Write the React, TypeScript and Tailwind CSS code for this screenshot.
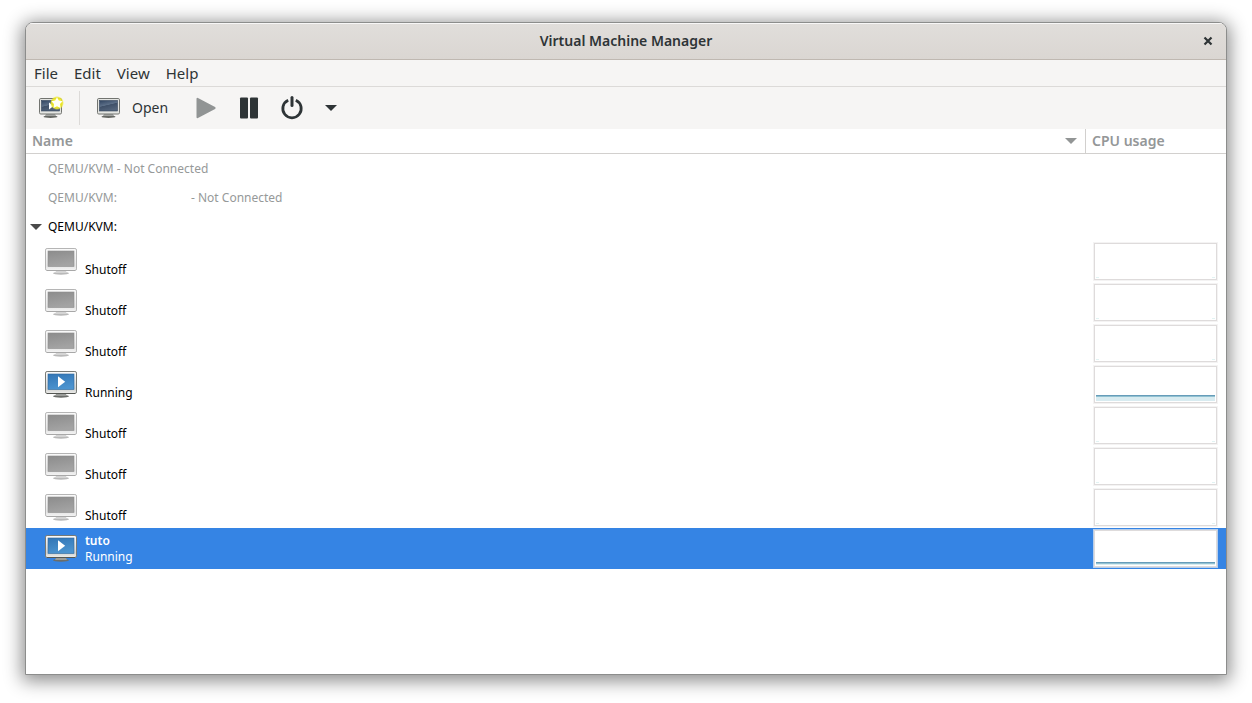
import { useState } from "react";

type Machine = { id: number; name: string; state: "Shutoff" | "Running"; load: number };

const machines: Machine[] = [
  { id: 1, name: "", state: "Shutoff", load: 0 },
  { id: 2, name: "", state: "Shutoff", load: 0 },
  { id: 3, name: "", state: "Shutoff", load: 0 },
  { id: 4, name: "", state: "Running", load: 5 },
  { id: 5, name: "", state: "Shutoff", load: 0 },
  { id: 6, name: "", state: "Shutoff", load: 0 },
  { id: 7, name: "", state: "Shutoff", load: 0 },
  { id: 8, name: "tuto", state: "Running", load: 2 },
];

function StateIcon({ running }: { running: boolean }) {
  const id = running ? "run" : "off";
  return (
    <svg width="32" height="28" viewBox="0 0 32 28" aria-hidden="true" className="block shrink-0">
      <defs>
        <linearGradient id={`${id}-case`} x1="0" y1="0" x2="0" y2="1">
          <stop offset="0" stopColor={running ? "#fbfbfb" : "#fafafa"} />
          <stop offset="0.8" stopColor={running ? "#d2d3d1" : "#e6e6e6"} />
          <stop offset="1" stopColor={running ? "#eeeeec" : "#f4f4f4"} />
        </linearGradient>
        <linearGradient id={`${id}-screen`} x1="0" y1="0" x2="0.3" y2="1">
          <stop offset="0" stopColor={running ? "#3275b5" : "#8c8c8c"} />
          <stop offset="1" stopColor={running ? "#4b93cf" : "#a3a3a3"} />
        </linearGradient>
      </defs>
      <ellipse cx="16" cy="25.3" rx="8" ry="1.5" fill={running ? "#6b6d6a" : "#b9b9b9"} />
      <path d="M11 23h10l1 2H10z" fill={running ? "#9a9c99" : "#d4d4d4"} />
      <rect x="0.5" y="0.5" width="31" height="22" rx="1.6" fill={`url(#${id}-case)`} stroke={running ? "#777975" : "#b5b5b5"} />
      <rect x="3" y="3" width="26" height="15.5" fill={`url(#${id}-screen)`} stroke={running ? "#30699f" : "#8e8e8e"} strokeWidth="0.6" />
      {running && <path d="M13 5.2v11l7.2-5.5z" fill="#fff" />}
      <path d="M2 22.5h28" stroke={running ? "#555753" : "#a8a8a8"} />
    </svg>
  );
}

function ToolbarMonitor({ fresh = false }: { fresh?: boolean }) {
  const id = fresh ? "new" : "open";
  return (
    <svg width="26" height="24" viewBox="0 0 26 24" aria-hidden="true" className="block">
      <defs>
        <linearGradient id={`${id}-tb`} x1="0" y1="0" x2="0.4" y2="1">
          <stop offset="0" stopColor="#2f4360" />
          <stop offset="0.5" stopColor="#5d7088" />
          <stop offset="0.55" stopColor="#3f5068" />
          <stop offset="1" stopColor="#52637a" />
        </linearGradient>
        <radialGradient id={`${id}-glow`}>
          <stop offset="0.5" stopColor="#f4ee20" />
          <stop offset="0.8" stopColor="#eee82c" stopOpacity="0.85" />
          <stop offset="1" stopColor="#eee82c" stopOpacity="0" />
        </radialGradient>
      </defs>
      <ellipse cx="12.5" cy="20.7" rx="7" ry="1.3" fill="#666864" />
      <path d="M8 18h9l1 2H7z" fill="#a3a5a2" />
      <rect x="1.5" y="2.5" width="22" height="15.5" rx="1.3" fill="#e4e5e2" stroke="#727470" />
      <rect x="3.5" y="4.5" width="18" height="10.5" fill={`url(#${id}-tb)`} stroke="#32435b" strokeWidth="0.6" />
      {fresh && (
        <>
          <path d="M11 6.5v7l4.5-3.5z" fill="#fff" />
          <circle cx="19" cy="7" r="7" fill={`url(#${id}-glow)`} />
          <path d="M19 1.2l1.8 3.4 3.8.7-2.6 2.8.5 3.9-3.5-1.7-3.5 1.7.5-3.9-2.6-2.8 3.8-.7z" fill="#fffff8" />
        </>
      )}
    </svg>
  );
}

function CpuGraph({ load }: { load: number }) {
  const y = 36 - load;
  return (
    <svg viewBox="0 0 125 39" className="block h-[39px] w-[125px]" shapeRendering="crispEdges" role="img" aria-label="CPU usage">
      <rect width="125" height="39" fill="#f0eeee" fillOpacity="0.7" />
      <rect x="1" y="1" width="123" height="37" fill="#dedbdb" />
      <rect x="2" y="2" width="121" height="35" fill="#fff" />
      {load > 0 ? (
        <>
          <rect x="3" y={y} width="119" height={load} fill="#d8ebf0" />
          <rect x="3" y={y} width="119" height="1" fill="#91c1d1" />
          <rect x="3" y={y - 1} width="119" height="1" fill="#669cb9" />
        </>
      ) : (
        <>
          <rect x="3" y="35" width="3" height="1" fill="#e2f3f3" />
          <rect x="119" y="35" width="3" height="1" fill="#e2f3f3" />
        </>
      )}
    </svg>
  );
}

export default function App() {
  const [selected, setSelected] = useState(8);
  return (
    <div className="flex min-h-screen bg-white px-[25px] pt-[22px] pb-7 font-['Noto_Sans','Open_Sans',sans-serif] text-[#2e3436]">
      <main className="flex min-w-0 flex-1 flex-col overflow-hidden rounded-t-lg border border-[#8c8d8c] bg-white shadow-[0_3px_18px_3px_rgba(0,0,0,0.45)]">
        <header className="flex h-[37px] items-center border-b border-[#bfb8b1] bg-linear-to-b from-[#e1dedb] to-[#dad6d2] px-2 shadow-[inset_0_1px_#f8f7f7]">
          <span className="w-5" />
          <h1 className="flex-1 text-center text-sm font-semibold">Virtual Machine Manager</h1>
          <button aria-label="Close" className="flex h-6 w-5 items-center justify-center">
            <svg width="10" height="10" viewBox="0 0 10 10" aria-hidden="true">
              <path d="M1.5 1.5l7 7M8.5 1.5l-7 7" stroke="#2e3436" strokeWidth="2.2" />
            </svg>
          </button>
        </header>
        <nav className="flex h-[27px] items-center gap-4 border-b border-[#dcdad8] bg-[#f6f5f4] px-2 pt-px text-[15px]">
          <button>File</button>
          <button>Edit</button>
          <button>View</button>
          <button>Help</button>
        </nav>
        <div role="toolbar" className="flex h-[42px] items-center bg-[#f6f5f4] text-sm">
          <button aria-label="New virtual machine" className="ml-3"><ToolbarMonitor fresh /></button>
          <span className="mr-4 ml-[15px] h-[34px] w-px bg-[#dcdad8]" />
          <button className="flex items-center gap-[10px]"><ToolbarMonitor />Open</button>
          <button aria-label="Run" className="ml-[27px]">
            <svg width="22" height="24" viewBox="0 0 22 24" aria-hidden="true" className="block">
              <path d="M2.5 2.8v18.4L19.6 12z" fill="#919494" stroke="#919494" strokeWidth="2" strokeLinejoin="round" />
            </svg>
          </button>
          <button aria-label="Pause" className="ml-[22px]">
            <svg width="20" height="24" viewBox="0 0 20 24" aria-hidden="true" className="block">
              <rect x="1" y="1.5" width="8" height="21" rx="1" fill="#2e3436" />
              <rect x="11" y="1.5" width="8" height="21" rx="1" fill="#2e3436" />
            </svg>
          </button>
          <button aria-label="Shut down" className="ml-[21px]">
            <svg width="24" height="24" viewBox="0 0 24 24" aria-hidden="true" className="block" fill="none" stroke="#2e3436" strokeLinecap="round">
              <path d="M8.2 4.2a9.2 9.2 0 1 0 7.6 0" strokeWidth="2.8" strokeLinecap="butt" />
              <path d="M12 1.6v8" strokeWidth="3" />
            </svg>
          </button>
          <button aria-label="Shut down options" className="ml-[21px]">
            <svg width="12" height="6" viewBox="0 0 12 6" aria-hidden="true" className="block"><path d="M0 0h12L6 6z" fill="#2e3436" /></svg>
          </button>
        </div>
        <table className="w-full table-fixed border-separate border-spacing-0 text-left">
          <colgroup>
            <col />
            <col className="w-[140px]" />
          </colgroup>
          <thead className="text-sm leading-6 text-[#949798]">
            <tr>
              <th className="border-r border-b border-[#d2d0ce] p-0 pr-2 pl-[6px] font-semibold">
                <button className="flex w-full items-center justify-between">
                  Name
                  <svg width="12" height="6" viewBox="0 0 12 6" aria-hidden="true"><path d="M0 0h12L6 6z" fill="#929595" /></svg>
                </button>
              </th>
              <th className="border-b border-[#d2d0ce] p-0 pl-[6px] font-semibold">CPU usage</th>
            </tr>
          </thead>
          <tbody className="text-xs leading-4 text-black">
            <tr className="h-[29px] text-[#969999]">
              <td colSpan={2} className="p-0 pl-[22px]">QEMU/KVM - Not Connected</td>
            </tr>
            <tr className="h-[29px] text-[#969999]">
              <td colSpan={2} className="p-0 pl-[22px]">
                <span className="flex">
                  <span className="w-[143px]">QEMU/KVM:</span>
                  <span>- Not Connected</span>
                </span>
              </td>
            </tr>
            <tr className="h-[29px]">
              <td colSpan={2} className="p-0 pl-1">
                <button className="flex items-center gap-[6px]">
                  <svg width="12" height="6" viewBox="0 0 12 6" aria-hidden="true"><path d="M0 0h12L6 6z" fill="#4a4a4a" /></svg>
                  QEMU/KVM:
                </button>
              </td>
            </tr>
            {machines.map((m) => (
              <tr
                key={m.id}
                onClick={() => setSelected(m.id)}
                aria-selected={m.id === selected}
                className={m.id === selected ? "h-[41px] bg-[#3584e4] text-white" : "h-[41px]"}
              >
                <td className="p-0 pl-[19px]">
                  <div className="flex items-center gap-2">
                    <StateIcon running={m.state === "Running"} />
                    <div>
                      <div className="h-4 font-semibold">{m.name}</div>
                      <div>{m.state}</div>
                    </div>
                  </div>
                </td>
                <td className="p-0 pl-[7px]"><CpuGraph load={m.load} /></td>
              </tr>
            ))}
          </tbody>
        </table>
      </main>
    </div>
  );
}
